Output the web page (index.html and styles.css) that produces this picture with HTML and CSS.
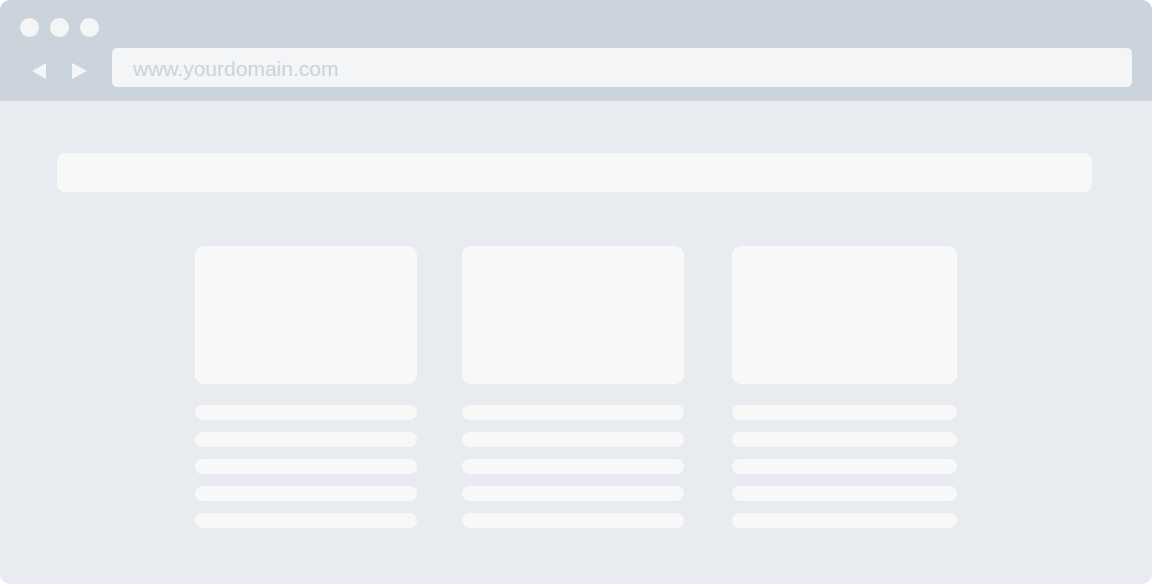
FILE: index.html
```html
<!DOCTYPE html>
<html lang="en">
<head>
    <meta charset="UTF-8">
    <title>Browser Wireframe</title>
    <link rel="stylesheet" href="styles.css">
</head>
<body>
    <div class="browser">
        <div class="toolbar">
            <div class="dots">
                <span class="dot"></span>
                <span class="dot"></span>
                <span class="dot"></span>
            </div>
            <div class="nav-row">
                <div class="arrows">
                    <svg class="arrow" width="14" height="16" viewBox="0 0 14 16"><polygon points="14,0 14,16 0,8"/></svg>
                    <svg class="arrow" width="15" height="16" viewBox="0 0 15 16"><polygon points="0,0 0,16 15,8"/></svg>
                </div>
                <div class="address">www.yourdomain.com</div>
            </div>
        </div>

        <div class="page">
            <div class="search-bar"></div>

            <div class="columns">
                <div class="column">
                    <div class="thumb"></div>
                    <ul class="lines">
                        <li></li><li></li><li></li><li></li><li></li>
                    </ul>
                </div>
                <div class="column">
                    <div class="thumb"></div>
                    <ul class="lines">
                        <li></li><li></li><li></li><li></li><li></li>
                    </ul>
                </div>
                <div class="column wide">
                    <div class="thumb"></div>
                    <ul class="lines">
                        <li></li><li></li><li></li><li></li><li></li>
                    </ul>
                </div>
            </div>
        </div>
    </div>
</body>
</html>
```
FILE: styles.css
```css
body {
    margin: 0;
    background: #fff;
    font-family: "Liberation Sans", Arial, sans-serif;
}

.browser {
    width: 1152px;
    height: 584px;
    border-radius: 10px;
    overflow: hidden;
    display: flex;
    flex-direction: column;
    background-color: #e8ebf0;
}

.toolbar {
    background-color: #cbd3dd;
    padding: 18px 20px 14px 20px;
}

.dots {
    display: flex;
    gap: 11px;
    height: 19px;
}

.dot {
    width: 19px;
    height: 19px;
    border-radius: 50%;
    background-color: #f4f5f7;
}

.nav-row {
    display: flex;
    align-items: center;
    margin-top: 11px;
    height: 39px;
}

.arrows {
    display: flex;
    align-items: center;
    gap: 26px;
    padding-left: 12px;
    padding-top: 7px;
    width: 80px;
}

.arrow {
    fill: #f4f5f7;
    display: block;
}

.address {
    flex: 1;
    height: 39px;
    box-sizing: border-box;
    background-color: #f4f5f7;
    border-radius: 5px;
    padding-left: 21px;
    padding-top: 3px;
    display: flex;
    align-items: center;
    font-size: 21px;
    color: #cbd3dd;
}

.page {
    flex: 1;
    padding: 52px 60px 0 57px;
}

.search-bar {
    height: 39px;
    border-radius: 8px;
    background-color: #f8f8f8;
}

.columns {
    display: flex;
    justify-content: center;
    gap: 45px;
    margin-top: 54px;
    margin-left: 3px;
}

.column {
    width: 222px;
}

.column.wide {
    width: 225px;
    margin-left: 3px;
}

.thumb {
    height: 138px;
    border-radius: 9px;
    background-color: #f8f8f8;
}

.lines {
    list-style-type: none;
    margin: 21px 0 0 0;
    padding: 0;
    display: flex;
    flex-direction: column;
    gap: 12px;
}

.lines li {
    height: 15px;
    border-radius: 8px;
    background-color: #f8f8f8;
}
```
